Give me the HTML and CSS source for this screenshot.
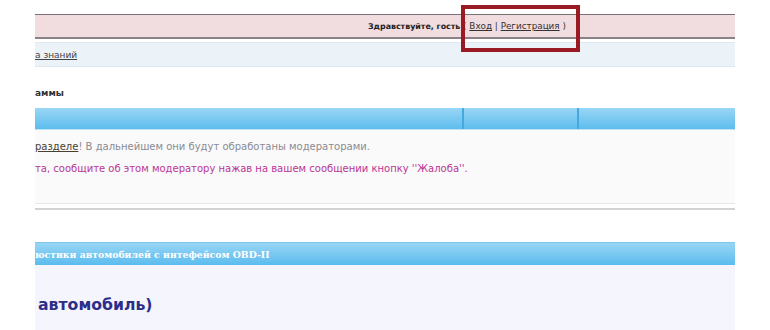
FILE: index.html
```html
<!DOCTYPE html>
<html lang="ru">
<head>
<meta charset="utf-8">
<link rel="stylesheet" href="styles.css">
</head>
<body>
<div class="page">
  <div class="userbar">
    <div class="welcome"><b>Здравствуйте, гость</b> ( <a href="#">Вход</a> | <a href="#">Регистрация</a> )</div>
    <span class="highlight"></span>
  </div>
  <div class="navstrip"><a href="#">а знаний</a></div>
  <div class="title">аммы</div>
  <div class="bluebar">
    <span class="cell c1"></span><span class="cell c2"></span><span class="cell c3"></span>
  </div>
  <div class="notice">
    <p class="gray"><a href="#">разделе</a>! В дальнейшем они будут обработаны модераторами.</p>
    <p class="pink">та, сообщите об этом модератору нажав на вашем сообщении кнопку ''Жалоба''.</p>
  </div>
  <div class="sep"></div>
  <div class="bluebar2">юстики автомобилей с интефейсом OBD-II</div>
  <div class="topic">автомобиль)</div>
</div>
</body>
</html>
```
FILE: styles.css
```css
html, body {
  margin: 0;
  padding: 0;
  background: #ffffff;
}
body {
  font-family: "DejaVu Sans", Verdana, sans-serif;
  width: 770px;
  height: 330px;
  overflow: hidden;
}
.page {
  margin-left: 35px;
  width: 700px;
  padding-top: 14px;
}
.userbar {
  position: relative;
  height: 22px;
  background: #f1dcdf;
  border-top: 1px solid #7a7072;
  border-bottom: 2px solid #8a8284;
  display: flex;
  align-items: center;
  padding-left: 333px;
  box-sizing: content-box;
  width: 367px;
}
.welcome {
  font-size: 8.8px;
  color: #333;
  white-space: nowrap;
}
.welcome b {
  color: #222;
  font-size: 7.9px;
}
.welcome a {
  color: #333;
  text-decoration: underline;
}
.highlight {
  position: absolute;
  left: 426px;
  top: -10px;
  width: 111px;
  height: 39px;
  border: 4px solid #9a1a24;
}
.navstrip {
  margin-top: 3px;
  height: 23px;
  background: #ebf3f9;
  border-top: 1px solid #dfe8ef;
  border-bottom: 1px solid #dfe8ef;
  display: flex;
  align-items: center;
  font-size: 9px;
}
.navstrip a {
  color: #444;
  text-decoration: underline;
}
.title {
  height: 41px;
  display: flex;
  align-items: center;
  padding-top: 11px;
  box-sizing: border-box;
  font-size: 9px;
  font-weight: bold;
  color: #333;
}
.bluebar {
  height: 21px;
  background: linear-gradient(#9ad6f5, #5dbdee);
  border-bottom: 1px solid #bfe3f5;
  display: flex;
}
.cell {
  height: 100%;
}
.c1 { width: 427px; border-right: 2px solid #44a9e0; }
.c2 { width: 113px; border-right: 2px solid #44a9e0; }
.c3 { flex: 1; }
.notice {
  background: #fafafa;
  border-bottom: 1px solid #e6e6e6;
  height: 74px;
  padding-top: 11px;
  box-sizing: border-box;
}
.notice p {
  margin: 0 0 10px 0;
  font-size: 10px;
  line-height: 12px;
  white-space: nowrap;
}
.gray { color: #8a8a94; }
.gray a { color: #4a4030; text-decoration: underline; }
.pink { color: #bb3596; }
.sep {
  margin-top: 4px;
  border-top: 2px solid #d2d2d2;
  height: 32px;
}
.bluebar2 {
  height: 22px;
  background: linear-gradient(#98d5f5, #5cbcee);
  border-top: 1px solid #7fc6ec;
  display: flex;
  align-items: center;
  font-family: "DejaVu Serif", Georgia, serif;
  font-weight: bold;
  font-size: 9.3px;
  color: #ffffff;
  white-space: nowrap;
}
.topic {
  background: #f5f5fd;
  height: 70px;
  padding: 30px 0 0 3px;
  box-sizing: border-box;
  font-size: 15.7px;
  font-weight: bold;
  color: #2e2e8a;
}
```
